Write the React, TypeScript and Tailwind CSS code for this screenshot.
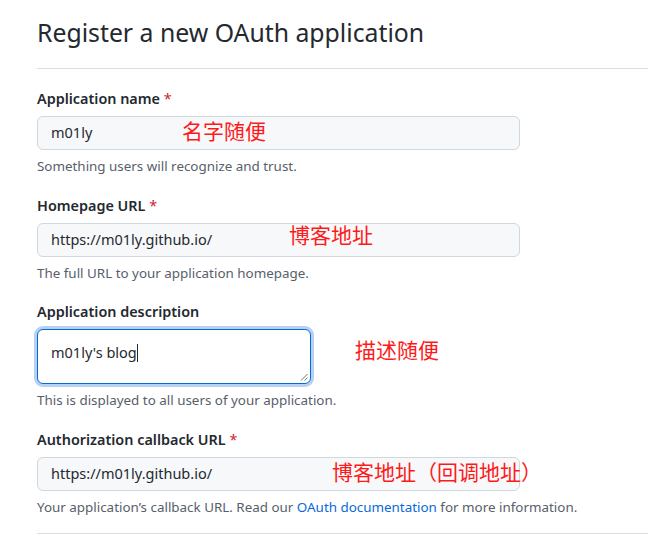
import React from 'react';

const font = { fontFamily: '"Noto Sans", "Liberation Sans", sans-serif' };
const cjk = { fontFamily: '"Noto Sans CJK SC", sans-serif' };

function Label({ text, required }: { text: string; required?: boolean }) {
  return (
    <div className="text-[14.4px] leading-[21px] font-semibold text-[#24292f] mb-[7px]">
      {text}
      {required && <span className="text-[#cf222e] font-normal"> *</span>}
    </div>
  );
}

function Note({ children }: { children: React.ReactNode }) {
  return <div className="mt-[7px] text-[13.4px] leading-[18px] text-[#57606a]">{children}</div>;
}

function TextInput({ value }: { value: string }) {
  return (
    <div className="w-[483px] h-[34px] px-[13px] flex items-center rounded-[6px] border border-[#d0d7de] bg-[#f6f8fa] text-[14.5px] text-[#24292f]">
      {value}
    </div>
  );
}

function Annotation({ text, className }: { text: string; className: string }) {
  return (
    <span className={`absolute text-[21px] leading-none text-[#ff1a1a] whitespace-nowrap ${className}`} style={cjk}>
      {text}
    </span>
  );
}

export default function App() {
  return (
    <div className="w-[648px] h-[539px] bg-white overflow-hidden pl-[37px]" style={font}>
      {/* Header */}
      <div className="border-b border-[#d8dee4] pt-[14px] pb-[18px]">
        <h1 className="text-[24.8px] leading-[36px] font-normal text-[#24292f]">Register a new OAuth application</h1>
      </div>

      <div className="mt-[19px] relative">
        <Label text="Application name" required />
        <TextInput value="m01ly" />
        <Note>Something users will recognize and trust.</Note>
        <Annotation text="名字随便" className="left-[145px] top-[32px]" />
      </div>

      <div className="mt-[20px] relative">
        <Label text="Homepage URL" required />
        <TextInput value="https://m01ly.github.io/" />
        <Note>The full URL to your application homepage.</Note>
        <Annotation text="博客地址" className="left-[252px] top-[29px]" />
      </div>

      <div className="mt-[19px] relative">
        <Label text="Application description" />
        <div className="relative w-[274px] h-[55px] rounded-[6px] border border-[#0969da] bg-white shadow-[0_0_0_3px_rgba(9,105,218,0.3)] px-[13px] pt-[12px] text-[14.5px] leading-[20px] text-[#24292f]">
          m01ly's blog
          <span className="inline-block w-px h-[18px] bg-[#24292f] align-middle -mt-[2px]" />
          <svg className="absolute right-[2px] bottom-[2px]" width="9" height="9" viewBox="0 0 9 9">
            <path d="M8.5 2 L2 8.5 M8.5 5.5 L5.5 8.5" stroke="#6e7781" strokeWidth="1" />
          </svg>
        </div>
        <Note>This is displayed to all users of your application.</Note>
        <Annotation text="描述随便" className="left-[318px] top-[38px]" />
      </div>

      <div className="mt-[20px] relative">
        <Label text="Authorization callback URL" required />
        <TextInput value="https://m01ly.github.io/" />
        <Note>
          Your application’s callback URL. Read our{' '}
          <span className="text-[#0969da]">OAuth documentation</span> for more information.
        </Note>
        <Annotation text="博客地址（回调地址）" className="left-[295px] top-[32px]" />
      </div>

      <div className="mt-[17px] border-b border-[#d8dee4]" />
    </div>
  );
}
